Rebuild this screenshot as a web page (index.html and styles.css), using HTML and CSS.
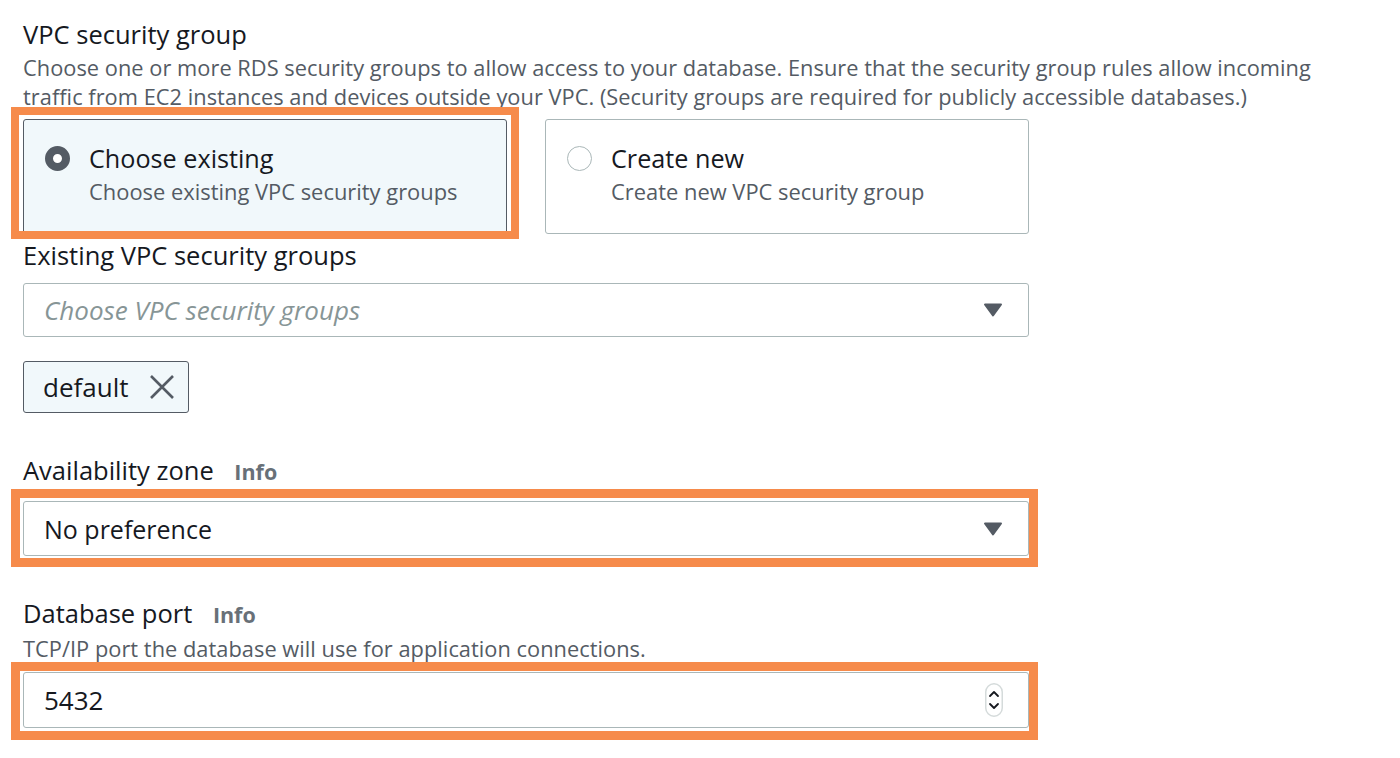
FILE: index.html
```html
<!DOCTYPE html>
<html lang="en">
<head>
<meta charset="utf-8">
<title>Connectivity</title>
<link rel="stylesheet" href="styles.css">
</head>
<body>
<main class="page">
  <section class="field">
    <h2 class="label">VPC security group</h2>
    <p class="desc">Choose one or more RDS security groups to allow access to your database. Ensure that the security group rules allow incoming traffic from EC2 instances and devices outside your VPC. (Security groups are required for publicly accessible databases.)</p>
    <div class="tiles">
      <div class="tile selected">
        <span class="radio on"></span>
        <div class="tile-text">
          <div class="tile-title">Choose existing</div>
          <div class="tile-sub">Choose existing VPC security groups</div>
        </div>
        <span class="hl hl-tile"></span>
      </div>
      <div class="tile">
        <span class="radio"></span>
        <div class="tile-text">
          <div class="tile-title">Create new</div>
          <div class="tile-sub">Create new VPC security group</div>
        </div>
      </div>
    </div>
  </section>

  <section class="field sg">
    <h2 class="label">Existing VPC security groups</h2>
    <div class="select sel-sg">
      <span class="placeholder">Choose VPC security groups</span>
      <svg class="caret" width="20" height="14" viewBox="0 0 20 14"><path d="M2 1.5 H18 L10 12.5 Z" fill="#545b64" stroke="#545b64" stroke-width="2" stroke-linejoin="round"/></svg>
    </div>
    <div class="token">
      <span class="token-text">default</span>
      <svg class="token-x" width="26" height="26" viewBox="0 0 26 26"><path d="M2 2 L24 24 M24 2 L2 24" stroke="#545b64" stroke-width="2.6" fill="none"/></svg>
    </div>
  </section>

  <section class="field az">
    <h2 class="label">Availability zone <span class="info">Info</span></h2>
    <div class="select sel-az">
      <span class="value">No preference</span>
      <svg class="caret" width="20" height="14" viewBox="0 0 20 14"><path d="M2 1.5 H18 L10 12.5 Z" fill="#545b64" stroke="#545b64" stroke-width="2" stroke-linejoin="round"/></svg>
      <span class="hl hl-az"></span>
    </div>
  </section>

  <section class="field port">
    <h2 class="label">Database port <span class="info">Info</span></h2>
    <p class="desc desc-port">TCP/IP port the database will use for application connections.</p>
    <div class="select input-port">
      <span class="value">5432</span>
      <span class="spinner">
        <svg width="18" height="34" viewBox="0 0 18 34"><rect x="0.75" y="0.75" width="16.5" height="32.5" rx="8.25" fill="#fff" stroke="#d5dbdb" stroke-width="1.5"/><path d="M5 13 L9 9 L13 13 M5 21 L9 25 L13 21" stroke="#16191f" stroke-width="1.8" fill="none" stroke-linecap="round" stroke-linejoin="round"/></svg>
      </span>
      <span class="hl hl-port"></span>
    </div>
  </section>
</main>
</body>
</html>
```

FILE: styles.css
```css
* { box-sizing: border-box; }

html, body {
  margin: 0;
  padding: 0;
  background: #ffffff;
}

body {
  font-family: "Open Sans", "Noto Sans", "Liberation Sans", sans-serif;
  color: #16191f;
}

.page {
  width: 1060px;
  min-height: 758px;
  padding: 19px 0 0 23px;
}

.label {
  margin: 0;
  font-size: 25.5px;
  line-height: 30px;
  font-weight: 400;
  color: #16191f;
  white-space: nowrap;
}

.info {
  font-size: 21.5px;
  font-weight: 700;
  color: #687078;
  margin-left: 14px;
}

.desc {
  margin: 4px 0 0;
  font-size: 21.8px;
  line-height: 29px;
  letter-spacing: 0.03px;
  color: #545b64;
  width: 1330px;
}

.tiles {
  margin-top: 8px;
  display: grid;
  grid-template-columns: 1fr 1fr;
  column-gap: 38px;
  width: 1006px;
}

.tile {
  position: relative;
  display: flex;
  align-items: flex-start;
  gap: 19px;
  height: 115px;
  padding: 23px 20px 0 21px;
  border: 1px solid #aab7b8;
  border-radius: 3px;
  background: #ffffff;
}

.tile.selected {
  border-color: #545b64;
  background: #f1f8fb;
}

.radio {
  flex: none;
  width: 25px;
  height: 25px;
  margin-top: 3px;
  border-radius: 50%;
  border: 1.5px solid #aab7b8;
  background: #fff;
}

.radio.on {
  border: 8px solid #545b64;
}

.tile-title {
  font-size: 25.2px;
  line-height: 30px;
  color: #16191f;
  white-space: nowrap;
}

.tile-sub {
  margin-top: 5px;
  font-size: 21.9px;
  line-height: 28px;
  color: #545b64;
  white-space: nowrap;
}

.sg {
  margin-top: 6px;
}

.select {
  position: relative;
  display: flex;
  align-items: center;
  justify-content: space-between;
  width: 1006px;
  height: 55px;
  padding: 0 25px 0 20px;
  border: 1px solid #aab7b8;
  border-radius: 3px;
  background: #ffffff;
  font-size: 25px;
}

.sel-sg {
  margin-top: 13px;
  height: 54px;
}

.placeholder {
  font-style: italic;
  font-size: 26px;
  color: #879596;
}

.value {
  color: #16191f;
}

.caret {
  display: block;
}

.token {
  margin-top: 24px;
  display: inline-flex;
  align-items: center;
  gap: 21px;
  height: 52px;
  padding: 0 13px 0 19px;
  border: 1.5px solid #545b64;
  border-radius: 3px;
  background: #f1f8fb;
}

.token-text {
  font-size: 26px;
  color: #16191f;
}

.token-x {
  display: block;
}

.az {
  margin-top: 42px;
}

.sel-az {
  margin-top: 14px;
}

.port {
  margin-top: 42px;
}

.desc-port {
  margin-top: 5px;
  line-height: 28px;
}

.input-port {
  margin-top: 9px;
  height: 56px;
  padding-right: 25px;
}

.input-port .value {
  font-size: 26px;
}

.spinner {
  display: flex;
}

.spinner svg {
  display: block;
}

/* orange highlight annotations overlaid on the controls */
.hl {
  position: absolute;
  border-style: solid;
  border-color: #f68b4b;
  pointer-events: none;
}

.hl-tile {
  top: -13px;
  left: -13px;
  right: -13px;
  bottom: -6px;
  border-width: 8px;
}

.hl-az {
  top: -13px;
  left: -13px;
  right: -10px;
  bottom: -12px;
  border-width: 9px;
}

.hl-port {
  top: -11px;
  left: -13px;
  right: -10px;
  bottom: -13px;
  border-width: 9px;
}
```
